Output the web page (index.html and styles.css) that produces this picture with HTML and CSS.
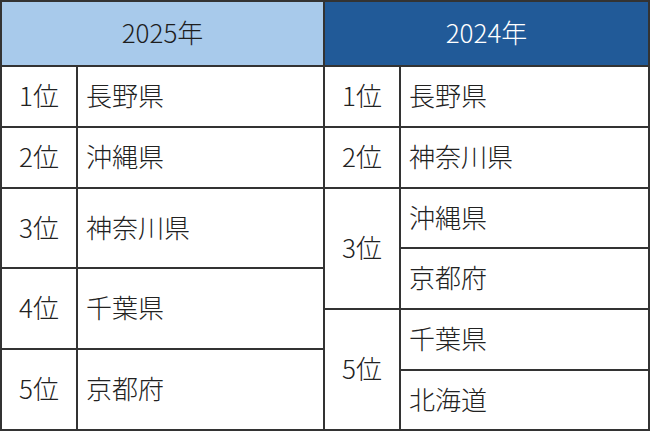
FILE: index.html
```html
<!DOCTYPE html>
<html lang="ja">
<head>
<meta charset="utf-8">
<link rel="stylesheet" href="styles.css">
</head>
<body>
<div class="ranking">
  <div class="half">
    <div class="head head-light">2025年</div>
    <div class="cell rank">1位</div><div class="cell name">長野県</div>
    <div class="cell rank">2位</div><div class="cell name">沖縄県</div>
    <div class="cell rank">3位</div><div class="cell name">神奈川県</div>
    <div class="cell rank">4位</div><div class="cell name">千葉県</div>
    <div class="cell rank">5位</div><div class="cell name">京都府</div>
  </div>
  <div class="half half-right">
    <div class="head head-dark">2024年</div>
    <div class="cell rank">1位</div><div class="cell name">長野県</div>
    <div class="cell rank">2位</div><div class="cell name">神奈川県</div>
    <div class="cell rank span2">3位</div><div class="cell name">沖縄県</div>
    <div class="cell name">京都府</div>
    <div class="cell rank span2">5位</div><div class="cell name">千葉県</div>
    <div class="cell name">北海道</div>
  </div>
</div>
</body>
</html>
```
FILE: styles.css
```css
html, body {
  margin: 0;
  padding: 0;
  background: #ffffff;
}

.ranking {
  display: flex;
  gap: 2px;
  width: 650px;
  height: 431px;
  padding: 2px;
  box-sizing: border-box;
  background: #333333;
  font-family: "Noto Sans CJK JP", "Noto Sans", sans-serif;
  font-weight: 300;
  font-size: 26px;
  line-height: 1;
  color: #222222;
}

.half {
  display: grid;
  grid-template-columns: 74px 1fr;
  grid-template-rows: 63px 59px 59px 78px 79px 79px;
  gap: 2px;
  width: 321px;
  flex: none;
}

.half-right {
  flex: 1;
  grid-template-rows: 63px 59px 59px 58px 59px 59px 58px;
}

.head {
  grid-column: 1 / span 2;
  display: flex;
  align-items: center;
  justify-content: center;
  padding-bottom: 3px;
}

.head-light {
  background: #a8caeb;
  color: #1e1e1e;
}

.head-dark {
  background: #215a98;
  color: #ffffff;
}

.cell {
  background: #ffffff;
  display: flex;
  align-items: center;
  padding-bottom: 3px;
}

.rank {
  justify-content: center;
}

.name {
  padding-left: 8px;
}

.span2 {
  grid-row: span 2;
}
```
